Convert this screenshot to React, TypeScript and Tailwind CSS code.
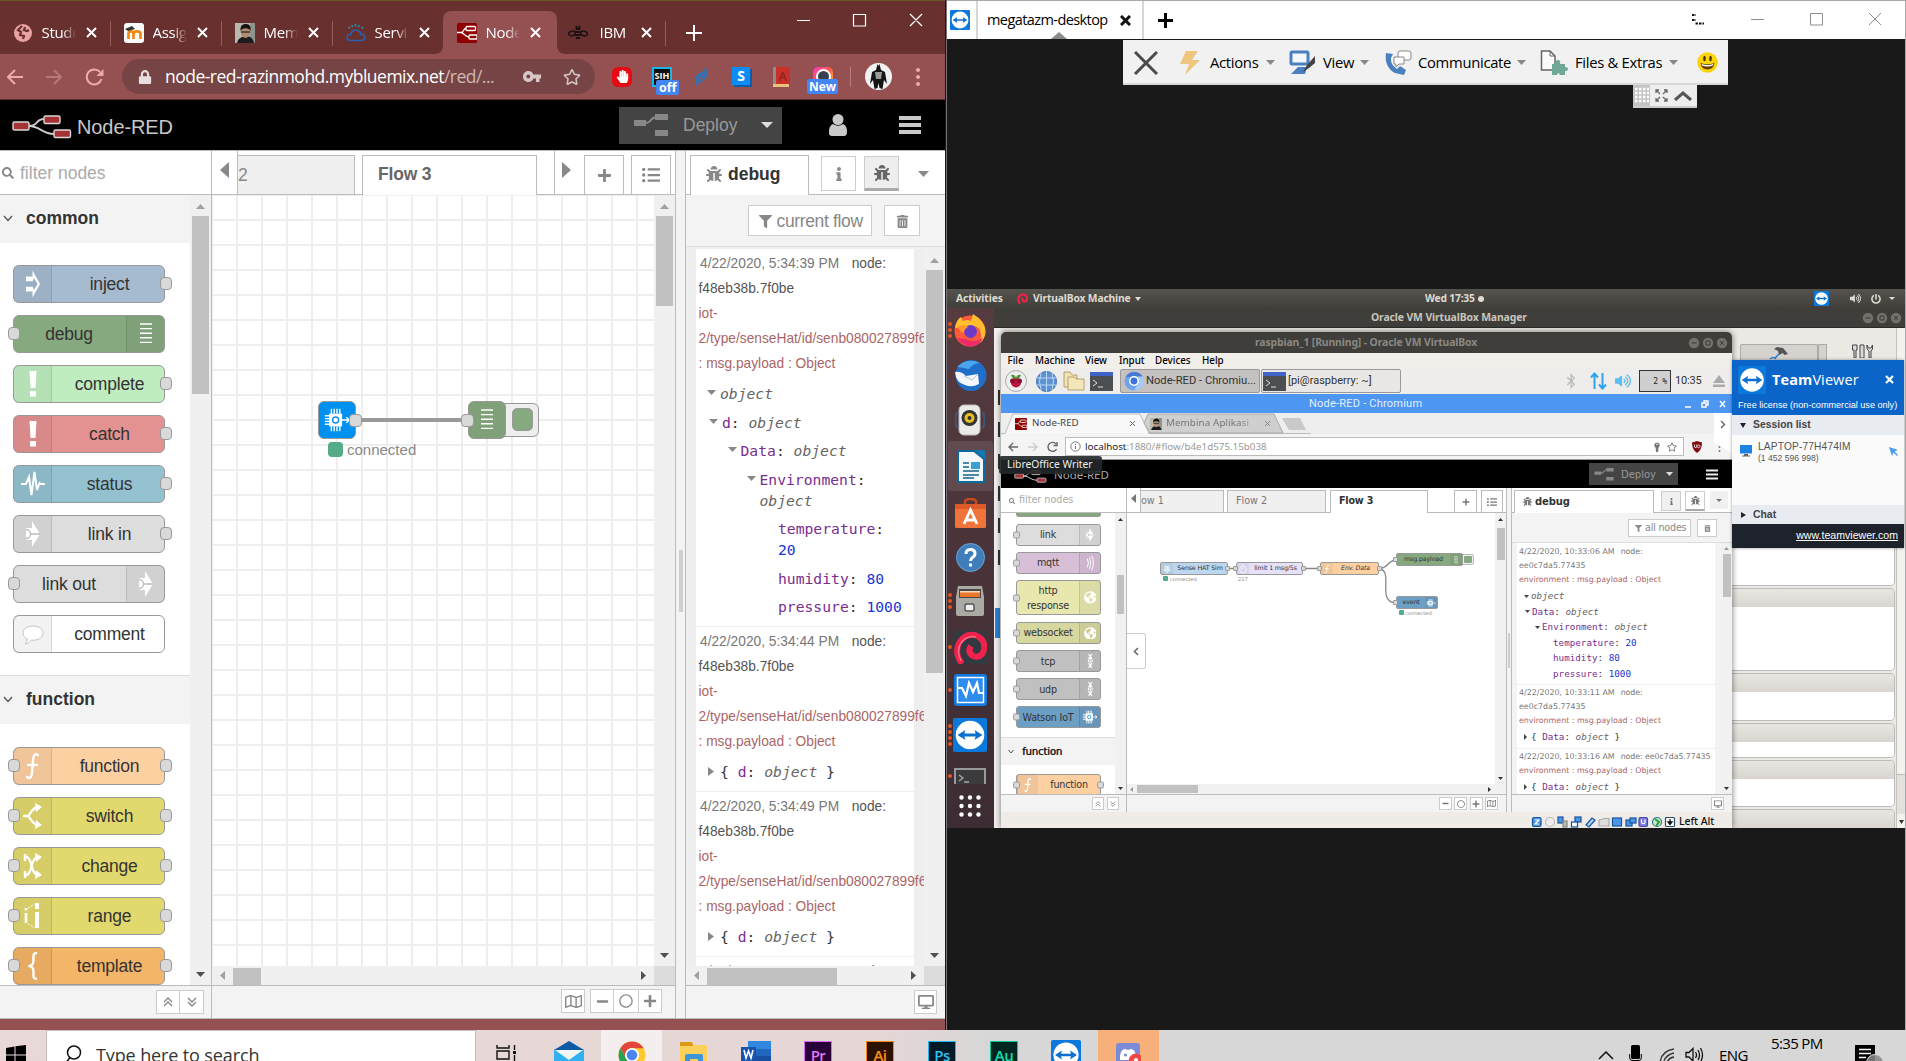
import React from "react";
import { FaBug, FaFilter, FaInfo, FaListUl, FaPlus, FaMinus, FaSearch, FaRegMap, FaDesktop, FaTrashAlt, FaRegCircle, FaLock, FaRegStar, FaKey, FaBluetoothB, FaVolumeUp, FaPowerOff, FaHandPaper, FaGlobeAmericas } from "react-icons/fa";

type Dir = "up" | "down" | "left" | "right";
const triPath: Record<Dir, string> = {
  up: "M0 10 L5 0 L10 10Z",
  down: "M0 0 H10 L5 10Z",
  left: "M10 0 V10 L0 5Z",
  right: "M0 0 L10 5 L0 10Z",
};

function Tri({ dir, w, h, color, className = "" }: { dir: Dir; w: number; h: number; color: string; className?: string }) {
  return (
    <svg width={w} height={h} viewBox="0 0 10 10" preserveAspectRatio="none" className={"shrink-0 " + className}>
      <path d={triPath[dir]} fill={color} />
    </svg>
  );
}

function TeamViewerLogo({ size, className = "" }: { size: number; className?: string }) {
  return (
    <svg width={size} height={size} viewBox="0 0 30 30" className={"shrink-0 " + className}>
      <rect width="30" height="30" rx="1.5" fill="#0b79db" />
      <circle cx="15" cy="15" r="12.6" fill="#fff" />
      <path d="M4 15 L11 10.5 L10 13.7 H20 L19 10.5 L26 15 L19 19.5 L20 16.3 H10 L11 19.5Z" fill="#0b6fd0" />
    </svg>
  );
}

/* ---------- Node icons ---------- */

function NodeIcon({ name, size }: { name: string; size: number }) {
  const p = { width: size, height: size, viewBox: "0 0 30 30", fill: "none", stroke: "#fff", strokeWidth: 2 };
  switch (name) {
    case "inject":
      return (
        <svg {...p}>
          <path d="M8 7.500 H14.500 V1.500 L22 15 L14.500 28.500 V22.500 H8 V17.500 H14.500 V12.500 H8Z" fill="#fff" stroke="none" />
          <path d="M8 12.500 H14.500 L16 9 L19.500 15 L16 21 L14.500 17.500 H8Z" fill="#9aadc2" stroke="none" />
        </svg>
      );
    case "debug":
      return (
        <svg {...p} strokeWidth={1.4}>
          <path d="M9 5 H21 M9 9.600 H21 M9 14.200 H21 M9 18.800 H21 M9 23.400 H21" />
        </svg>
      );
    case "bang":
      return (
        <svg {...p}>
          <path d="M11.500 2 H18.500 L17.500 19 H12.500Z M12 22 H18 V27.500 H12Z" fill="#fff" stroke="none" />
        </svg>
      );
    case "status":
      return (
        <svg {...p}>
          <path d="M3 15 H8 L11 8 L13.500 26 L16.500 3 L19 21 L21.500 14 L23 15 H27" />
        </svg>
      );
    case "link":
      return (
        <svg {...p}>
          <path d="M14 2 L22 15 L14 28 V21 H8 V9 H14Z" fill="#fff" stroke="none" />
          <path d="M8 10.500 A4.500 4.500 0 0 1 8 19.500 M13 15 H22" stroke="#bbb" strokeWidth="1.300" />
        </svg>
      );
    case "comment":
      return (
        <svg {...p} stroke="#c4c4c4" strokeWidth={1}>
          <path d="M15 7 C9 7 5 10 5 14 C5 17 7 19 9.500 20 C9 22.500 8 24 7 25 C10 24.500 12 23 13.500 21 C20 22 25 18.500 25 14 C25 10 21 7 15 7Z" fill="#fff" />
        </svg>
      );
    case "function":
      return (
        <svg {...p} strokeWidth={2.400} strokeLinecap="round">
          <path d="M20 4 C17 2 15.500 4.500 15 9 L14 22 C13.500 27 11.500 28 9 26 M10 14 H19" />
        </svg>
      );
    case "switch":
      return (
        <svg {...p} strokeWidth={2.400}>
          <path d="M5 15 H10 M20 6 C14 7 14 11 10 15 C14 19 14 23 20 24" />
          <path d="M17 2 L24 6 L18 11Z M17 28 L24 24 L18 19Z" fill="#fff" stroke="none" />
        </svg>
      );
    case "change":
      return (
        <svg {...p} strokeWidth={2.400}>
          <path d="M6 6 H9 C15 9 12 21 19 24 M6 24 H9 C15 21 12 9 19 6 M7 10 V3 M7 27 V20" />
          <path d="M17 2 L24 6 L18 11Z M17 28 L24 24 L18 19Z" fill="#fff" stroke="none" />
        </svg>
      );
    case "range":
      return (
        <svg {...p}>
          <path d="M8 12 V22 M8 7 V9.500" strokeWidth="2.600" />
          <path d="M19 11 V27 M19 2 V8" strokeWidth="4" />
          <path d="M10 7 L17 3 M10 23 L17 27" strokeWidth="1" strokeDasharray="2 1.500" />
        </svg>
      );
    case "template":
      return (
        <svg {...p} strokeWidth={2.400}>
          <path d="M19 2 C14.500 2 15.500 5 15.500 9 C15.500 13 14.500 15 10.500 15 C14.500 15 15.500 17 15.500 21 C15.500 25 14.500 28 19 28" />
        </svg>
      );
    case "wave":
      return (
        <svg {...p}>
          <path d="M10 7 Q14 15 10 23 M14 4 Q19 15 14 26 M18 1 Q25 15 18 29" strokeWidth="1.800" />
        </svg>
      );
    case "port":
      return (
        <svg {...p} strokeWidth={2.200}>
          <path d="M19 2 Q5 15 19 28 M12 2 Q26 15 12 28 M15.500 8 V22" strokeDasharray="5 1.200" />
        </svg>
      );
    case "globe":
      return <FaGlobeAmericas color="#fff" size={size * 0.8} />;
    case "clock":
      return (
        <svg {...p}>
          <circle cx="15" cy="17" r="10" />
          <path d="M11 12 L15 17 M12 3 H18" />
        </svg>
      );
    case "pi":
      return (
        <svg {...p}>
          <circle cx="11" cy="9" r="3" /><circle cx="19" cy="9" r="3" /><circle cx="15" cy="15" r="3" /><circle cx="9" cy="18" r="3" /><circle cx="21" cy="18" r="3" /><circle cx="15" cy="23" r="3" />
        </svg>
      );
    default:
      return (
        <svg {...p}>
          <rect x="6.500" y="8" width="14" height="14" fill="#fff" stroke="none" rx="1" />
          <path d="M9 3 V8 M12 3 V8 M15 3 V8 M18 3 V8 M9 22 V27 M12 22 V27 M15 22 V27 M18 22 V27 M2 10.500 H7 M2 13.500 H7 M2 16.500 H7 M2 19.500 H7 M20 15 H28 M25 12 L28 15 L25 18" strokeWidth="1.500" />
          <circle cx="13.500" cy="15" r="3.200" stroke="#0b8fe8" strokeWidth="1.500" />
        </svg>
      );
  }
}

interface PNode { label: string; color: string; icon: string; left?: boolean; right?: boolean; iconRight?: boolean }

function PaletteNode({ label, color, icon, left, right, iconRight }: PNode) {
  return (
    <div className={"relative mb-[12px] flex h-[38px] w-[152px] rounded-[6px] border-[1.500px] border-[#999] " + color + (iconRight ? " flex-row-reverse" : "")}>
      <div className={"flex w-[38px] items-center justify-center bg-black/5 " + (iconRight ? "border-l border-black/10" : "border-r border-black/10")}>
        <NodeIcon name={icon} size={30} />
      </div>
      <div className={"flex flex-1 items-center justify-center text-[17.500px] tracking-[-0.200px] text-[#333] " + (iconRight ? "pr-[2px]" : "pl-[3px]")}>{label}</div>
      {left && <span className="absolute top-[11px] left-[-6.500px] size-[12.500px] rounded-[4px] border-[1.500px] border-[#999] bg-[#d9d9d9]" />}
      {right && <span className="absolute top-[11px] right-[-8px] size-[12.500px] rounded-[4px] border-[1.500px] border-[#999] bg-[#d9d9d9]" />}
    </div>
  );
}

const commonNodes: PNode[] = [
  { label: "inject", color: "bg-[#a6bbcf]", icon: "inject", right: true },
  { label: "debug", color: "bg-[#87a980]", icon: "debug", left: true, iconRight: true },
  { label: "complete", color: "bg-[#c0edc0]", icon: "bang", right: true },
  { label: "catch", color: "bg-[#e49191]", icon: "bang", right: true },
  { label: "status", color: "bg-[#94c1d0]", icon: "status", right: true },
  { label: "link in", color: "bg-[#dddddd]", icon: "link", right: true },
  { label: "link out", color: "bg-[#dddddd]", icon: "link", left: true, iconRight: true },
  { label: "comment", color: "bg-white", icon: "comment" },
];
const functionNodes: PNode[] = [
  { label: "function", color: "bg-[#fdd0a2]", icon: "function", left: true, right: true },
  { label: "switch", color: "bg-[#e2d96e]", icon: "switch", left: true, right: true },
  { label: "change", color: "bg-[#e2d96e]", icon: "change", left: true, right: true },
  { label: "range", color: "bg-[#e2d96e]", icon: "range", left: true, right: true },
  { label: "template", color: "bg-[#f3b567]", icon: "template", left: true, right: true },
];

/* ---------- Chrome ---------- */

function CloseX({ size = 11, color = "#fff", sw = 2, className = "" }: { size?: number; color?: string; sw?: number; className?: string }) {
  return (
    <svg width={size} height={size} viewBox={"0 0 " + size + " " + size} className={"shrink-0 " + className}>
      <path d={`M1 1 L${size - 1} ${size - 1} M${size - 1} 1 L1 ${size - 1}`} stroke={color} strokeWidth={sw} />
    </svg>
  );
}

function NodeRedMark({ size }: { size: number }) {
  return (
    <svg width={size} height={size} viewBox="0 0 20 20" fill="none" stroke="#fff" strokeWidth="1.300">
      <rect width="20" height="20" rx="1.500" fill="#8f0000" stroke="none" />
      <rect x="9" y="3.500" width="9.500" height="4" rx="1" />
      <rect x="12" y="12" width="8" height="4" rx="1" />
      <path d="M0 9.500 H4 C7 9.500 6 5.500 9 5.500 M4 9.500 C7 9.500 8 14 12 14" />
    </svg>
  );
}

function Face({ size }: { size: number }) {
  return (
    <svg width={size} height={size} viewBox="0 0 20 20">
      <rect width="20" height="20" fill="#b9b8ad" />
      <rect x="15" width="5" height="20" fill="#8d948c" />
      <path d="M2 20 C3 15 8 13 11 13 C16 13 18 16 19 20Z" fill="#1c1c1e" />
      <ellipse cx="10.500" cy="9" rx="4.600" ry="6" fill="#b48a72" />
      <path d="M5.500 8 C5 2 8 1 11 1 C15 1 16 4 15.500 8 C14 5 8 4 5.500 8Z" fill="#17130f" />
      <path d="M6 9 H15" stroke="#222" strokeWidth="1.200" />
    </svg>
  );
}

const favicons = [
  <svg width="18" height="18" viewBox="0 0 18 18"><circle cx="9" cy="9" r="9" fill="#eba2a2" /><path d="M8 2 L4 6 L7 8 L6 11 L10 12 L9 15 M11 3 L10 6 L13 7 L15 6" stroke="#68302f" strokeWidth="2.200" fill="none" /></svg>,
  <svg width="20" height="20" viewBox="0 0 20 20"><rect width="20" height="20" rx="3" fill="#fafafa" /><path d="M4.500 16 V10 M4.500 11 C4.500 7.500 9.500 7.500 9.500 11 V16 M9.500 11 C9.500 7.500 16.500 7.500 16.500 11 V16" stroke="#f08a12" strokeWidth="2.700" fill="none" /><path d="M1 6 L8 3 L11 6 L4 8Z" fill="#333" /></svg>,
  <Face size={20} />,
  <svg width="20" height="20" viewBox="0 0 20 20" fill="none" strokeWidth="1.600"><path d="M5 17.500 C-.5 17 0 11 4.500 11.500 C6 6 14 6 14.500 11 C20 11 20 17.500 15.500 17.500Z" stroke="#2e5fae" /><path d="M2.500 4 L4 5.500 M9.500 1 V3.500 M17 4 L15.500 5.500 M6 2 L6.500 4 M13 2 L12.500 4" stroke="#2a93a8" /></svg>,
  <NodeRedMark size={20} />,
  <svg width="20" height="16" viewBox="0 0 20 16" fill="none" stroke="#1b1214" strokeWidth="1.400"><ellipse cx="4" cy="8.500" rx="3.300" ry="2.300" transform="rotate(-15 4 8.500)" /><ellipse cx="16" cy="8.500" rx="3.300" ry="2.300" transform="rotate(15 16 8.500)" /><path d="M7.500 4 H12.500 M7 7 H13 M7 10 H13 M8 13 H12 M8 1 L9 3 M12 1 L11 3" strokeWidth="2" /></svg>,
];
const tabTitles = ["Stude", "Assig", "Mem", "Servi", "Node", "IBM W"];

function ChromeTabs() {
  return (
    <div className="flex h-[54px] shrink-0 border-t border-[#6a5a2c] bg-[#68302f] font-['Open_Sans',sans-serif]">
      {tabTitles.map((t, i) => (
        <div key={t} className="relative flex h-full w-[111px] shrink-0 items-center pt-[10px]">
          {i === 4 && (
            <svg className="absolute top-[10px] left-[-10px]" width="132" height="43" viewBox="0 0 132 43">
              <path d="M0 43 Q9 43 9 34 V9 Q9 0 18 0 H114 Q123 0 123 9 V34 Q123 43 132 43Z" fill="#955051" />
            </svg>
          )}
          <span className="relative ml-[12px] flex w-[21px] justify-center">{favicons[i]}</span>
          <span className={"relative ml-[8.500px] w-[34px] overflow-hidden text-[15px] tracking-[-0.300px] whitespace-nowrap text-white " + (i === 5 ? "pl-[3px] [mask-image:linear-gradient(90deg,#000_80%,transparent_95%)]" : "[mask-image:linear-gradient(90deg,#000_60%,transparent)]")}>{t}</span>
          <CloseX className="relative ml-[10px]" size={11} />
          {i !== 4 && i !== 3 && <span className="absolute top-[20px] right-0 h-[25px] w-px bg-[#93605f]" />}
        </div>
      ))}
      <svg className="mt-[24px] ml-[20px]" width="16" height="16" viewBox="0 0 16 16"><path d="M8 0 V16 M0 8 H16" stroke="#fff" strokeWidth="2" /></svg>
      <svg className="mt-[12px] ml-[94px]" width="130" height="14" viewBox="0 0 130 14" fill="none" stroke="#fff" strokeWidth="1.200">
        <path d="M1 7.500 H14 M57.500 1.500 H69.500 V13 H57.500Z M114 1 L126 13 M126 1 L114 13" />
      </svg>
    </div>
  );
}

function ChromeToolbar() {
  return (
    <div className="flex h-[46px] shrink-0 items-center border-b border-[#5c2f30] bg-[#955051] font-['Open_Sans',sans-serif]">
      <svg className="ml-[6px] shrink-0" width="98" height="18" viewBox="0 0 98 18" fill="none" strokeWidth="2">
        <path d="M17 9 H2 M9 2 L2 9 L9 16" stroke="#f0a9a9" />
        <path d="M40 9 H55 M48 2 L55 9 L48 16" stroke="#b97777" />
        <path d="M94 4 A7.500 7.500 0 1 0 95.500 11" stroke="#f0a9a9" /><path d="M97.500 1 V8 H90.500Z" fill="#f0a9a9" />
      </svg>
      <div className="ml-[18px] flex h-[35px] w-[473px] shrink-0 items-center rounded-full bg-[#764444]">
        <FaLock className="ml-[16px] shrink-0" size={14} color="#e8dede" />
        <span className="ml-[13px] w-[345px] text-[17.500px] tracking-[-0.520px] whitespace-nowrap text-white">node-red-razinmohd.mybluemix.net<span className="text-[#d0b8b8]">/red/...</span></span>
        <svg className="ml-[13px] shrink-0" width="18" height="11" viewBox="0 0 18 11"><path fillRule="evenodd" d="M5.500 0 C2 0 0 2.500 0 5.500 C0 8.500 2 11 5.500 11 C8 11 9.500 9.500 10.300 7.500 H13 V11 H16.500 V7.500 H18 V3.500 H10.300 C9.500 1.500 8 0 5.500 0Z M5.300 3.600 A1.900 1.900 0 1 1 5.300 7.400 A1.900 1.900 0 1 1 5.300 3.600Z" fill="#d6c6c6" /></svg>
        <FaRegStar className="ml-[22px] shrink-0" size={18} color="#d6c6c6" />
      </div>
      <span className="ml-[17px] flex size-[20px] shrink-0 items-center justify-center rounded-[6px] bg-[#e60a14]"><FaHandPaper size={13} color="#fff" /></span>
      <span className="relative ml-[20px] flex size-[20px] shrink-0 items-start justify-center border-2 border-[#18b5e8] bg-[#101010] text-[9px] leading-[14px] font-bold text-white">SIH
        <span className="absolute top-[11px] left-[2px] rounded-[2px] bg-[#4285f4] px-[3px] text-[12.500px] leading-[15px]">off</span>
      </span>
      <svg className="ml-[22px] shrink-0" width="15" height="20" viewBox="0 0 15 20"><path d="M12 0 C14 6 14 12 7 15 L2 19 L1 13 C0 9 4 7 8 5Z" fill="#2f73b6" /><path d="M3 17 L11 4 M4 11 L9 12" stroke="#8a5860" strokeWidth="1" /></svg>
      <svg className="ml-[23px] shrink-0" width="20" height="20" viewBox="0 0 20 20"><rect x="2" y="2" width="18" height="18" fill="#0a5da8" /><rect width="18" height="18" fill="#0c8df5" /><text x="9" y="14" textAnchor="middle" fontSize="14" fontWeight="bold" fontFamily="Open Sans" fill="#fff">S</text></svg>
      <svg className="ml-[21px] shrink-0" width="17" height="20" viewBox="0 0 17 20"><rect width="17" height="20" rx="1" fill="#c9302a" /><rect width="3" height="20" fill="#8f8c8c" /><rect y="17" width="16" height="3" fill="#e6c27a" /><text x="9.500" y="14" textAnchor="middle" fontSize="13" fontFamily="Open Sans" fill="#7d1f1c">A</text></svg>
      <span className="relative ml-[23px] flex size-[20px] shrink-0 items-center justify-center rounded-[5px] bg-[linear-gradient(135deg,#f03ac2,#ff5e4a_50%,#ffc830)]">
        <span className="size-[15px] rounded-full border-2 border-white bg-[#35414f]" />
        <span className="absolute top-[12px] left-[-6px] rounded-[2px] bg-[#4285f4] px-[2px] text-[12px] leading-[15px] font-bold text-white">New</span>
      </span>
      <span className="ml-[17px] h-[20px] w-px bg-[#b87a7b]" />
      <svg className="ml-[14px] shrink-0" width="27" height="27" viewBox="0 0 27 27"><circle cx="13.500" cy="13.500" r="13.500" fill="#f1f1f1" /><path d="M5 21 L7 9 L11 7 L12.500 1 L13.500 3 L14.500 1 L16 7 L20 9 L22 21 L19 17 L17.500 26 L14.500 25 L13.500 20 L12.500 25 L9.500 26 L8 17Z" fill="#151515" /><path d="M10 9 H17 L16 16 H11Z" fill="#9b9b9b" /></svg>
      <svg className="ml-[24px] shrink-0" width="4" height="18" viewBox="0 0 4 18"><path d="M2 0 A2 2 0 1 1 1.990 0Z M2 7 A2 2 0 1 1 1.990 7Z M2 14 A2 2 0 1 1 1.990 14Z" fill="#f0a9a9" /></svg>
    </div>
  );
}

function DeployGlyph({ w, h }: { w: number; h: number }) {
  return (
    <svg className="shrink-0" width={w} height={h} viewBox="0 0 34 23">
      <path d="M11 9 C19 9 15 3 23 3" stroke="#888" strokeWidth="2" fill="none" />
      <path d="M0 6 H12 V12 H0Z M21 0 H34 V6 H21Z M21 16 H34 V22 H21Z" fill="#888" />
    </svg>
  );
}

function NodeRedLogo({ w, h }: { w: number; h: number }) {
  return (
    <svg className="shrink-0" width={w} height={h} viewBox="0 0 60 24" fill="none">
      <path d="M17 11 C27 11 23 4 32 4 M17 11 C28 11 30 19 42 19" stroke="#ccc" strokeWidth="1.800" />
      <g fill="#a53335" stroke="#d8d8d8" strokeWidth="1.400"><rect x="1" y="7" width="16" height="8" rx="1.500" /><rect x="32" y="1" width="16" height="7.500" rx="1.500" /><rect x="42" y="15" width="16.500" height="7.500" rx="1.500" /></g>
    </svg>
  );
}

function NodeRedHeader() {
  return (
    <div className="flex h-[50px] shrink-0 items-center bg-black">
      <span className="ml-[12px] pt-1"><NodeRedLogo w={60} h={24} /></span>
      <span className="ml-[5px] w-[110px] pt-[3px] text-[20px] tracking-[-0.100px] text-[#c7c7c7]">Node-RED</span>
      <div className="ml-[432px] flex h-[37px] w-[163px] items-center bg-[#444]">
        <span className="ml-[15px]"><DeployGlyph w={34} h={23} /></span>
        <span className="ml-[15px] w-[78px] text-[17.500px] text-[#999]">Deploy</span>
        <Tri dir="down" w={12} h={6} color="#ddd" />
      </div>
      <svg className="ml-[46px]" width="20" height="22" viewBox="0 0 20 22" fill="#c9c9c9"><circle cx="10" cy="5.500" r="5.500" /><path d="M5 10 Q10 13.500 15 10 Q19.500 12 19 19 Q18.500 22 16 22 H4 Q1 22 1 19 Q.5 12 5 10Z" /></svg>
      <svg className="ml-[51px]" width="22" height="18" viewBox="0 0 22 18"><path d="M0 2 H22 M0 9 H22 M0 16 H22" stroke="#c9c9c9" strokeWidth="4" /></svg>
    </div>
  );
}

function VScroll({ thumb }: { thumb: string }) {
  return (
    <div className="flex w-[21px] shrink-0 flex-col items-center bg-[#f0f0f0]">
      <Tri dir="up" w={9} h={5} color="#a0a0a0" className="mt-[9px] mb-[7px]" />
      <div className={"w-[17px] bg-[#c1c1c1] " + thumb} />
      <Tri dir="down" w={9} h={5} color="#505050" className="mt-auto mb-[8px]" />
    </div>
  );
}

function HScroll({ thumb }: { thumb: string }) {
  return (
    <div className="flex h-[19px] w-full shrink-0 items-center bg-[#f0f0f0]">
      <Tri dir="left" w={5} h={9} color="#a0a0a0" className="ml-[8px]" />
      <div className={"mt-[2px] ml-[8px] h-[17px] bg-[#c1c1c1] " + thumb} />
      <Tri dir="right" w={5} h={9} color="#505050" className="mr-[8px] ml-auto" />
    </div>
  );
}

function CategoryHeader({ label, first }: { label: string; first?: boolean }) {
  return (
    <div className={"flex items-center bg-[#f3f3f3] pb-[1px] " + (first ? "h-[48px]" : "h-[49px] border-t border-[#ddd]")}>
      <svg className="ml-[3px]" width="10" height="7" viewBox="0 0 10 7"><path d="M1 1 L5 5.500 L9 1" stroke="#555" strokeWidth="1.400" fill="none" /></svg>
      <span className="ml-[13px] text-[17.500px] font-bold text-[#333]">{label}</span>
    </div>
  );
}

function DoubleChevron({ down, size = 10 }: { down?: boolean; size?: number }) {
  return (
    <svg width={size} height={size} viewBox="0 0 10 10" className={down ? "rotate-180" : ""}><path d="M1 5 L5 1 L9 5 M1 9 L5 5 L9 9" stroke="#888" strokeWidth="1.400" fill="none" /></svg>
  );
}

function Palette() {
  return (
    <div className="flex w-[212px] shrink-0 flex-col border-r border-[#bbb]">
      <div className="flex h-[44px] shrink-0 items-center border-b border-[#bbb] bg-white">
        <FaSearch className="ml-[2px]" size={12} color="#888" />
        <span className="ml-[6px] pt-[2px] text-[17.500px] text-[#aaa]">filter nodes</span>
      </div>
      <div className="flex h-[790px] shrink-0">
        <div className="w-[190px] overflow-hidden bg-white">
          <CategoryHeader label="common" first />
          <div className="pt-[22px] pb-[10px] pl-[13px]">{commonNodes.map((n) => <PaletteNode key={n.label} {...n} />)}</div>
          <CategoryHeader label="function" />
          <div className="pt-[23px] pl-[13px]">{functionNodes.map((n) => <PaletteNode key={n.label} {...n} />)}</div>
        </div>
        <VScroll thumb="h-[178px]" />
      </div>
      <div className="flex h-[34px] items-start justify-end border-t border-[#bbb] bg-[#f3f3f3] pt-[4px] pr-[7px]">
        <span className="flex h-[24px] w-[24px] items-center justify-center border border-[#ccc] bg-white"><DoubleChevron /></span>
        <span className="flex h-[24px] w-[24px] items-center justify-center border border-l-0 border-[#ccc] bg-white"><DoubleChevron down /></span>
      </div>
    </div>
  );
}

function Port({ className }: { className: string }) {
  return <span className={"absolute size-[13px] rounded-[4px] border-[1.500px] border-[#999] bg-[#d9d9d9] " + className} />;
}

function Workspace() {
  const btn = "flex h-[24px] items-center justify-center border border-[#ccc] bg-white";
  return (
    <div className="flex w-[464px] shrink-0 flex-col border-r border-[#bbb] bg-white">
      <div className="flex h-[44px] shrink-0 border-b border-[#bbb]">
        <div className="flex w-[26px] items-start justify-center border-r border-[#bbb] pt-[11px]"><Tri dir="left" w={9} h={16} color="#888" /></div>
        <div className="mt-[4px] flex w-[117px] items-center border-t border-r border-[#bbb] bg-[#f0f0f0] text-[17.500px] text-[#888]">2</div>
        <div className="relative mt-[4px] ml-[7px] flex h-[41px] w-[175px] items-center border-x border-t border-[#bbb] bg-white pb-[4px] pl-[15px] text-[17.500px] font-bold tracking-[-0.200px] text-[#666]">Flow 3</div>
        <div className="ml-[17px] flex w-[30px] items-start border-l border-[#bbb] pt-[11px] pl-[7px]"><Tri dir="right" w={9} h={16} color="#888" /></div>
        <div className="mt-[4px] flex w-[40px] items-center justify-center border border-b-0 border-[#bbb]"><FaPlus size={15} color="#888" /></div>
        <div className="mt-[4px] ml-[7px] flex w-[40px] items-center justify-center border border-b-0 border-[#bbb]"><FaListUl size={18} color="#888" /></div>
      </div>
      <div className="flex h-[771px] shrink-0">
        <div className="relative w-[442px] overflow-hidden bg-white bg-[linear-gradient(#eee_2px,transparent_2px),linear-gradient(90deg,#eee_2px,transparent_2px)] bg-[length:25px_25px] bg-[position:-1px_-1px] font-['Liberation_Sans',sans-serif]">
          <div className="absolute top-[223px] left-[146px] h-[4px] w-[110px] bg-[#999]" />
          <div className="absolute top-[206px] left-[106px] flex size-[38px] items-center justify-center rounded-[6px] border-[1.500px] border-[#999] bg-[#0090f0]"><NodeIcon name="iot" size={28} /></div>
          <Port className="top-[218.500px] left-[137px]" />
          <div className="absolute top-[208px] left-[284px] h-[34px] w-[43px] rounded-[6px] border-[1.500px] border-[#999] bg-[#eee]"><span className="absolute top-[4px] right-[5px] h-[23px] w-[21px] rounded-[5px] border border-[#999] bg-[#87a980]" /></div>
          <div className="absolute top-[206px] left-[256px] flex size-[38px] items-center justify-center rounded-[6px] border-[1.500px] border-[#999] bg-[#80a079]"><NodeIcon name="debug" size={30} /></div>
          <Port className="top-[218.500px] left-[249px]" />
          <span className="absolute top-[247px] left-[115.500px] size-[15px] rounded-[4px] bg-[#5a8]" />
          <span className="absolute top-[246px] left-[135px] text-[15px] leading-[18px] text-[#888]">connected</span>
        </div>
        <VScroll thumb="h-[90px]" />
      </div>
      <div className="flex h-[19px] shrink-0">
        <div className="w-[442px]"><HScroll thumb="w-[28px]" /></div>
        <div className="flex-1 bg-[#dcdcdc]" />
      </div>
      <div className="flex h-[34px] items-start justify-end border-t border-[#bbb] bg-[#f3f3f3] pt-[3px] pr-[13px]">
        <span className={btn + " mr-[5px] w-[24px]"}><FaRegMap size={17} color="#888" /></span>
        <span className={btn + " w-[24px]"}><FaMinus size={13} color="#888" /></span>
        <span className={btn + " w-[24px] border-x-0"}><FaRegCircle size={14} color="#888" /></span>
        <span className={btn + " w-[24px]"}><FaPlus size={14} color="#888" /></span>
      </div>
    </div>
  );
}

function Row({ indent, name, value, obj, brk }: { indent: string; name?: string; value?: string; obj?: boolean; brk?: boolean }) {
  return (
    <div className={"flex items-start py-[3.750px] " + indent}>
      {obj ? <Tri dir="down" w={9} h={5} color="#888" className="mt-[7px] mr-[4px]" /> : null}
      <div className="whitespace-nowrap">
        {name && <><span className="text-[#792e90]">{name}</span>:{brk ? <br /> : " "}</>}
        {obj ? <i className="text-[#666]">object</i> : <span className="text-[#2033d6]">{value}</span>}
      </div>
    </div>
  );
}

function MessageMeta({ time }: { time: string }) {
  return (
    <div className="pt-[1.500px] pl-[2.500px] text-[13.750px] leading-[25px] whitespace-nowrap text-[#555]">
      <div className="pl-[1.500px]"><span className="text-[#777]">{time}</span><span className="ml-[12.500px]">node:</span></div>
      <div>f48eb38b.7f0be</div>
      <div className="text-[#a66]">iot-<br />2/type/senseHat/id/senb080027899f6<br />: msg.payload : Object</div>
    </div>
  );
}

function CollapsedRow({ name, big }: { name: string; big?: boolean }) {
  return (
    <div className={"flex items-center " + (big ? "h-[28.500px] pl-[12px]" : "h-[15.500px] pl-[7px]")}>
      <Tri dir="right" w={big ? 6 : 3} h={big ? 9 : 6} color={big ? "#888" : "#444"} />
      <span className={(big ? "ml-[6px]" : "ml-[4px]") + " whitespace-pre text-[#333]"}>{"{ "}<span className="text-[#792e90]">{name}</span>: <i className="text-[#666]">object</i>{" }"}</span>
    </div>
  );
}

function DebugSidebar() {
  const mono = "font-['DejaVu_Sans_Mono',monospace] text-[14.700px] leading-[21px] pt-[4px] text-[#333]";
  return (
    <div className="flex w-[260px] shrink-0 flex-col border-l border-[#bbb] bg-white">
      <div className="flex h-[44px] shrink-0 border-b border-[#bbb]">
        <div className="relative mt-[4px] ml-[4px] flex h-[40px] w-[119px] items-center border-x border-t border-[#bbb] bg-white pb-[3px] pl-[15px]">
          <FaBug size={16} color="#888" /><span className="ml-[6px] text-[17.500px] font-bold text-[#333]">debug</span>
        </div>
        <div className="mt-[5px] ml-[12px] flex h-[35px] w-[35px] items-center justify-center border border-[#ccc]"><FaInfo size={14} color="#888" /></div>
        <div className="mt-[5px] ml-[8px] flex h-[35px] w-[35px] items-center justify-center border border-b-3 border-[#ccc] border-b-[#aaa] bg-[#eee]"><FaBug size={16} color="#666" /></div>
        <Tri dir="down" w={11} h={6} color="#888" className="mt-[20px] ml-[19px]" />
      </div>
      <div className="flex h-[52px] shrink-0 items-start border-b border-[#ddd] bg-[#f3f3f3] pt-[10px] text-[17.500px] text-[#888]">
        <div className="ml-[62px] flex h-[31px] w-[124px] items-center border border-[#ccc] bg-white pt-[2px] pl-[10px]"><FaFilter size={13} /><span className="ml-[4.500px] tracking-[-0.350px] whitespace-nowrap">current flow</span></div>
        <div className="ml-[12px] flex h-[31px] w-[36px] items-center justify-center border border-[#ccc] bg-white pt-px"><FaTrashAlt size={13} /></div>
      </div>
      <div className="flex h-[719px] shrink-0 bg-[#f0f0f0] pt-[2px]">
        <div className="w-[238px] overflow-hidden bg-[#eee] pl-[10px]">
          <div className="w-[218px] bg-white">
            <div className="h-[378px] border-b border-[#eee]">
              <MessageMeta time="4/22/2020, 5:34:39 PM" />
              <div className={mono}>
                <Row indent="pl-[11px]" obj /><Row indent="pl-[13px]" name="d" obj /><Row indent="pl-[31.500px]" name="Data" obj />
                <Row indent="pl-[50.500px]" name="Environment" obj brk />
                <Row indent="pl-[82px]" name="temperature" value="20" brk /><Row indent="pl-[82px]" name="humidity" value="80" /><Row indent="pl-[82px]" name="pressure" value="1000" />
              </div>
            </div>
            {["4/22/2020, 5:34:44 PM", "4/22/2020, 5:34:49 PM", "4/22/2020, 5:34:54 PM"].map((t) => (
              <div key={t} className="h-[165px] border-b border-[#eee]"><MessageMeta time={t} /><div className={mono}><CollapsedRow name="d" big /></div></div>
            ))}
          </div>
        </div>
        <VScroll thumb="h-[403px]" />
      </div>
      <div className="flex h-[19px] shrink-0">
        <div className="w-[238px]"><HScroll thumb="w-[130px]" /></div>
        <div className="flex-1 bg-[#dcdcdc]" />
      </div>
      <div className="flex h-[34px] items-start justify-end border-t border-[#bbb] bg-[#f3f3f3] pt-[4px] pr-[8px]">
        <span className="flex h-[24px] w-[23px] items-center justify-center border border-[#ccc] bg-white"><FaDesktop size={16} color="#888" /></span>
      </div>
    </div>
  );
}

function ChromeWindow() {
  return (
    <div className="flex h-[1030px] w-[945px] shrink-0 flex-col overflow-hidden bg-[#955051] font-['Liberation_Sans',sans-serif]">
      <ChromeTabs />
      <ChromeToolbar />
      <NodeRedHeader />
      <div className="flex h-[869px] shrink-0 border-y border-[#bbb] bg-[#f3f3f3]">
        <Palette />
        <Workspace />
        <div className="flex w-[9px] shrink-0 items-start justify-center"><span className="mt-[399px] h-[62px] w-[4px] bg-[#d0d0d0]" /></div>
        <DebugSidebar />
      </div>
    </div>
  );
}

/* ---------- Remote desktop ---------- */

function MiniNode({ label, color, icon, h = "h-[21.500px]", mb = "mb-[6.600px]", left = true, right, iconLeft }: { label: React.ReactNode; color: string; icon: string; h?: string; mb?: string; left?: boolean; right?: boolean; iconLeft?: boolean }) {
  return (
    <div className={"relative flex w-[85px] shrink-0 rounded-[3px] border border-[#999] " + color + " " + h + " " + mb + (iconLeft ? " flex-row-reverse" : "")}>
      <div className="flex flex-1 items-center justify-center text-center text-[9.600px] leading-[15px] tracking-[-0.200px] whitespace-nowrap text-[#333]">{label}</div>
      <div className="flex w-[21px] items-center justify-center border-l border-black/10 bg-black/5"><NodeIcon name={icon} size={16} /></div>
      {left && <span className="absolute top-1/2 left-[-4px] size-[7px] -translate-y-1/2 rounded-[2px] border border-[#999] bg-[#d9d9d9]" />}
      {right && <span className="absolute top-1/2 right-[-4px] size-[7px] -translate-y-1/2 rounded-[2px] border border-[#999] bg-[#d9d9d9]" />}
    </div>
  );
}

function MiniPalette() {
  return (
    <div className="flex w-[126px] shrink-0 flex-col border-r border-[#bbb]">
      <div className="flex h-[25px] shrink-0 items-center border-b border-[#bbb] bg-white pt-[1px]"><FaSearch className="ml-[8px]" size={6} color="#777" /><span className="ml-[4px] text-[9.600px] text-[#aaa]">filter nodes</span></div>
      <div className="flex h-[281px] shrink-0">
        <div className="flex w-[114px] flex-col overflow-hidden bg-white">
          <div className="ml-[15px] h-[4px] w-[85px] shrink-0 rounded-b-[3px] border border-t-0 border-[#999] bg-[#87a980]" />
          <div className="flex shrink-0 flex-col pt-[7px] pl-[15px]">
            <MiniNode label="link" color="bg-[#ddd]" icon="link" />
            <MiniNode label="mqtt" color="bg-[#d8bfd8]" icon="wave" />
            <MiniNode label={<>http<br />response</>} color="bg-[#e7e7ae]" icon="globe" h="h-[35px]" mb="mb-[7px]" />
            <MiniNode label="websocket" color="bg-[#d7d7a0]" icon="globe" />
            <MiniNode label="tcp" color="bg-[#c0c0c0]" icon="port" />
            <MiniNode label="udp" color="bg-[#c0c0c0]" icon="port" />
            <MiniNode label="Watson IoT" color="bg-[#6d9fc5]" icon="iot" />
          </div>
          <div className="mt-[2.500px] flex h-[28px] shrink-0 items-center border-t border-[#ddd] bg-[#f3f3f3]"><svg className="ml-[7px]" width="6" height="5" viewBox="0 0 6 5"><path d="M.5 1 L3 4 L5.500 1" stroke="#555" fill="none" /></svg><span className="ml-[8px] text-[10px] tracking-[-0.100px] text-[#222] [text-shadow:0.4px_0_#222]">function</span></div>
          <div className="pt-[9px] pl-[15px]"><MiniNode label="function" color="bg-[#fdd0a2]" icon="function" right iconLeft /></div>
        </div>
        <div className="flex w-[11px] flex-col items-center bg-[#f1f1f1]">
          <Tri dir="up" w={5} h={3} color="#333" className="mt-[5px]" /><div className="mt-[54px] h-[39px] w-[7px] bg-[#c1c1c1]" /><Tri dir="down" w={5} h={3} color="#333" className="mt-auto mb-[4px]" />
        </div>
      </div>
      <div className="flex h-[18px] justify-end gap-[3px] border-t border-[#bbb] bg-[#f3f3f3] pt-[2px] pr-[7px]">
        <span className="flex h-[13px] w-[12px] items-center justify-center border border-[#ccc] bg-white"><DoubleChevron size={6} /></span>
        <span className="flex h-[13px] w-[12px] items-center justify-center border border-[#ccc] bg-white"><DoubleChevron size={6} down /></span>
      </div>
    </div>
  );
}

function FlowNode({ className, children, icon, iconRight }: { className: string; children: React.ReactNode; icon: string; iconRight?: boolean }) {
  return (
    <div className={"absolute flex h-[13px] items-center rounded-[2px] border border-[#999] text-[6.300px] leading-none tracking-[-0.150px] whitespace-nowrap text-[#333] " + className + (iconRight ? " flex-row-reverse" : "")}>
      <span className="flex h-full w-[12px] shrink-0 items-center justify-center bg-black/5"><NodeIcon name={icon} size={10} /></span>
      <span className="flex-1 text-center">{children}</span>
    </div>
  );
}

function MiniPort({ className }: { className: string }) {
  return <span className={"absolute size-[5px] rounded-[1px] border border-[#999] bg-[#d9d9d9] " + className} />;
}

function MiniWorkspace() {
  const btn = "flex h-[13px] w-[13px] items-center justify-center border border-[#ccc] bg-white";
  return (
    <div className="flex w-[380px] shrink-0 flex-col border-r border-[#bbb] bg-white">
      <div className="flex h-[25px] shrink-0 border-b border-[#bbb] text-[9.600px] text-[#777]">
        <div className="flex w-[14px] justify-center border-r border-[#bbb] pt-[6px]"><Tri dir="left" w={5} h={9} color="#777" /></div>
        <div className="mt-[2px] flex w-[83px] items-center border-t border-r border-[#bbb] bg-[#f0f0f0]">ow 1</div>
        <div className="mt-[2px] ml-[3px] flex w-[99px] items-center border-x border-t border-[#bbb] bg-[#f0f0f0] pl-[8px]">Flow 2</div>
        <div className="mt-[2px] ml-[4px] flex h-[23px] w-[98px] items-center border-x border-t border-[#bbb] bg-white pb-[1px] pl-[8px] font-bold tracking-[-0.200px] text-[#333]">Flow 3</div>
        <div className="mt-[2px] ml-[26px] flex w-[23px] items-center justify-center border border-b-0 border-[#bbb]"><FaPlus size={8} color="#777" /></div>
        <div className="mt-[2px] ml-[4px] flex w-[22px] items-center justify-center border border-b-0 border-[#bbb]"><FaListUl size={10} color="#777" /></div>
      </div>
      <div className="flex h-[271px] shrink-0">
        <div className="relative w-[368px] bg-white">
          <svg className="absolute top-0 left-0" width="368" height="120" viewBox="0 0 368 120" fill="none" stroke="#888" strokeWidth="1.300"><path d="M100 55.500 H111 M175 55.500 H195 M252 55.500 C262 55.500 260 47 270 47 M252 55.500 C268 58 248 90 270 90" /></svg>
          <FlowNode className="top-[49px] left-[33px] w-[68px] bg-[#bcd7ee]" icon="pi">Sense HAT Sim</FlowNode>
          <FlowNode className="top-[49px] left-[109px] w-[67px] bg-[#e6e0f8]" icon="clock">limit 1 msg/5s</FlowNode>
          <FlowNode className="top-[49px] left-[193px] w-[59px] bg-[#fdd0a2]" icon="function"><i>Env. Data</i></FlowNode>
          <div className="absolute top-[41px] left-[334px] h-[11px] w-[13px] rounded-[2px] border border-[#bbb] bg-[#eee]"><span className="absolute top-px right-px h-[7px] w-[8px] rounded-[1px] bg-[#87a980]" /></div>
          <FlowNode className="top-[40px] left-[269px] w-[67px] bg-[#87a980]" icon="debug" iconRight>msg.payload</FlowNode>
          <FlowNode className="top-[83px] left-[269px] w-[42px] bg-[#6d9fc5]" icon="iot" iconRight>event</FlowNode>
          <MiniPort className="top-[53px] left-[98px]" /><MiniPort className="top-[53px] left-[106px]" /><MiniPort className="top-[53px] left-[174px]" /><MiniPort className="top-[53px] left-[190px]" /><MiniPort className="top-[53px] left-[250px]" /><MiniPort className="top-[44px] left-[266px]" /><MiniPort className="top-[87px] left-[266px]" />
          <span className="absolute top-[63px] left-[36px] size-[5px] rounded-[1px] bg-[#5a8]" /><span className="absolute top-[63px] left-[43px] text-[5.100px] leading-[6px] text-[#888]">connected</span>
          <span className="absolute top-[63px] left-[111px] text-[5.100px] leading-[6px] text-[#888]">217</span>
          <span className="absolute top-[97px] left-[272px] size-[5px] rounded-[1px] bg-[#5a8]" /><span className="absolute top-[97px] left-[278px] text-[5.100px] leading-[6px] text-[#888]">connected</span>
          <div className="absolute top-[120px] left-0 flex h-[36px] w-[19px] items-center justify-center rounded-r-[3px] border border-l-0 border-[#ccc] bg-white"><svg width="6" height="9" viewBox="0 0 6 9"><path d="M5 1 L1.500 4.500 L5 8" stroke="#666" strokeWidth="1.500" fill="none" /></svg></div>
        </div>
        <div className="flex flex-1 flex-col items-center bg-[#f1f1f1]"><Tri dir="up" w={5} h={3} color="#333" className="mt-[5px]" /><div className="mt-[7px] h-[32px] w-[8px] bg-[#c1c1c1]" /><Tri dir="down" w={5} h={3} color="#333" className="mt-auto mb-[4px]" /></div>
      </div>
      <div className="flex h-[10px] shrink-0 items-center bg-[#f1f1f1]"><Tri dir="left" w={3} h={5} color="#999" className="ml-[3px]" /><div className="ml-[4px] h-[8px] w-[61px] bg-[#c1c1c1]" /><Tri dir="right" w={3} h={5} color="#333" className="mr-[15px] ml-auto" /></div>
      <div className="flex h-[18px] shrink-0 justify-end gap-[2.500px] border-t border-[#bbb] bg-[#f3f3f3] pt-[2px] pr-[8px]">
        <span className={btn}><FaMinus size={7} color="#777" /></span><span className={btn}><FaRegCircle size={8} color="#777" /></span><span className={btn}><FaPlus size={8} color="#777" /></span><span className={btn}><FaRegMap size={9} color="#777" /></span>
      </div>
    </div>
  );
}

function MiniRow({ indent, name, value }: { indent: string; name?: string; value?: string }) {
  return (
    <div className={"flex h-[15.500px] items-center " + indent}>
      {!value && <Tri dir="down" w={5} h={3} color="#444" className="mr-[2px]" />}
      <span className="whitespace-pre">{name && <><span className="text-[#792e90]">{name}</span>: </>}{value ? <span className="text-[#2033d6]">{value}</span> : <i className="text-[#666]">object</i>}</span>
    </div>
  );
}

function MiniMeta({ time, inline }: { time: string; inline?: boolean }) {
  return (
    <div className="pl-[2px] text-[7.900px] leading-[14.100px] whitespace-nowrap text-[#777]">
      <div>{time}<span className="ml-[6px] tracking-[-0.080px]">node:{inline && " ee0c7da5.77435"}</span></div>
      {!inline && <div>ee0c7da5.77435</div>}
      <div className="text-[#a66]">environment : msg.payload : Object</div>
    </div>
  );
}

function MiniSidebar() {
  const mono = "font-['DejaVu_Sans_Mono',monospace] text-[9.250px] pt-[1.800px] text-[#333]";
  return (
    <div className="flex w-[221px] shrink-0 flex-col border-l border-[#bbb] bg-white">
      <div className="flex h-[25px] shrink-0 border-b border-[#bbb]">
        <div className="mt-[2px] ml-[2px] flex h-[23px] w-[140px] items-center border-x border-t border-[#bbb] bg-white pb-[1px] pl-[8px]"><FaBug size={9} color="#777" /><span className="ml-[3px] text-[10px] font-bold tracking-[-0.100px] text-[#333]">debug</span></div>
        <div className="mt-[3px] ml-[7px] flex h-[20px] w-[20px] items-center justify-center border border-[#ccc] bg-[#f0f0f0]"><FaInfo size={7} color="#777" /></div>
        <div className="mt-[3px] ml-[4px] flex h-[20px] w-[20px] items-center justify-center border border-b-2 border-[#ccc] border-b-[#aaa]"><FaBug size={9} color="#777" /></div>
        <div className="mt-[3px] ml-[5px] flex h-[18px] w-[18px] items-center justify-center bg-[#f0f0f0]"><Tri dir="down" w={6} h={3} color="#777" /></div>
      </div>
      <div className="flex h-[30px] shrink-0 items-start border-b border-[#ddd] bg-[#f3f3f3] pt-[6px] text-[9.600px] text-[#888]">
        <div className="ml-[116px] flex h-[18px] w-[63px] items-center border border-[#ccc] bg-white pl-[6px] tracking-[-0.200px] whitespace-nowrap"><FaFilter size={7} /><span className="ml-[3px]">all nodes</span></div>
        <div className="ml-[6px] flex h-[18px] w-[20px] items-center justify-center border border-[#ccc] bg-white"><FaTrashAlt size={7} /></div>
      </div>
      <div className="flex h-[251px] shrink-0 bg-[#f3f3f3]">
        <div className="ml-[5px] h-full w-[198px] overflow-hidden bg-white">
          <div className="h-[142px] border-b border-[#eee] pt-[1.500px]"><MiniMeta time="4/22/2020, 10:33:06 AM" /><div className={mono}><MiniRow indent="pl-[7px]" /><MiniRow indent="pl-[8px]" name="Data" /><MiniRow indent="pl-[18px]" name="Environment" /><MiniRow indent="pl-[36px]" name="temperature" value="20" /><MiniRow indent="pl-[36px]" name="humidity" value="80" /><MiniRow indent="pl-[36px]" name="pressure" value="1000" /></div></div>
          <div className="h-[64px] border-b border-[#eee] pt-[0.500px]"><MiniMeta time="4/22/2020, 10:33:11 AM" /><div className={mono}><CollapsedRow name="Data" /></div></div>
          <div className="pt-[0.500px]"><MiniMeta time="4/22/2020, 10:33:16 AM" inline /><div className={mono}><CollapsedRow name="Data" /></div></div>
        </div>
        <div className="ml-auto flex w-[11px] flex-col items-center bg-[#f1f1f1]"><Tri dir="up" w={5} h={3} color="#999" className="mt-[4px]" /><div className="mt-[4px] h-[43px] w-[8px] bg-[#c1c1c1]" /><Tri dir="down" w={5} h={3} color="#333" className="mt-auto mb-[4px]" /></div>
      </div>
      <div className="flex h-[18px] shrink-0 justify-end border-t border-[#bbb] bg-[#f3f3f3] pt-[2px] pr-[8px]"><span className="flex h-[13px] w-[13px] items-center justify-center border border-[#ccc] bg-white"><FaDesktop size={8} color="#777" /></span></div>
    </div>
  );
}

function WinButtons() {
  return (
    <svg width="40" height="12" viewBox="0 0 40 12" className="shrink-0"><g fill="#73716b"><circle cx="6" cy="6" r="5.200" /><circle cx="20" cy="6" r="5.200" /><circle cx="34" cy="6" r="5.200" /></g><path d="M3.500 6 H8.500 M18 4 H22 V8 H18Z M32 4 L36 8 M36 4 L32 8" stroke="#3c3b37" fill="none" /></svg>
  );
}

function TerminalIcon() {
  return (
    <svg className="shrink-0" width="23" height="19" viewBox="0 0 23 19"><rect width="23" height="19" fill="#4c4f52" /><rect width="23" height="4" fill="#3f63c8" /><path d="M3 8 L7 11 L3 14 M8 15 H13" stroke="#ddd" fill="none" /></svg>
  );
}

function RaspbianWindow() {
  return (
    <div className="absolute top-[43px] left-[54px] flex h-[496px] w-[731px] flex-col overflow-hidden rounded-t-[5px] bg-[#efebe7] shadow-[0_0_6px_#0008]">
      <div className="flex h-[21px] shrink-0 items-center bg-[#3f3e3a] font-['Noto_Sans',sans-serif] text-[10.400px] font-bold text-[#8b8983]">
        <span className="ml-[254px] w-[433px] tracking-[-0.110px] whitespace-nowrap">raspbian_1 [Running] - Oracle VM VirtualBox</span><WinButtons />
      </div>
      <div className="flex h-[15px] shrink-0 items-center bg-[#f2efeb] pt-px font-['Noto_Sans',sans-serif] text-[9.800px] font-medium text-black">
        <span className="ml-[6.500px] w-[27.500px]">File</span><span className="w-[50px]">Machine</span><span className="w-[34px]">View</span><span className="w-[36px]">Input</span><span className="w-[47px]">Devices</span><span>Help</span>
      </div>
      <div className="flex h-[26px] shrink-0 items-center bg-[#eeedec] font-['Roboto',sans-serif] text-[11px] text-[#333]">
        <svg className="ml-[4px] shrink-0" width="22" height="22" viewBox="0 0 22 22"><circle cx="11" cy="11" r="10.500" fill="#eee" stroke="#aaa" /><circle cx="11" cy="12.500" r="5" fill="#b8123f" /><circle cx="7.500" cy="11" r="2.500" fill="#8e0f31" /><circle cx="14.500" cy="11" r="2.500" fill="#8e0f31" /><path d="M6 5 Q10 4 11 8 Q12 4 16 5 Q15 9 11 8.500 Q7 9 6 5Z" fill="#4f9a3c" /></svg>
        <svg className="ml-[9px] shrink-0" width="21" height="21" viewBox="0 0 21 21" fill="none"><circle cx="10.500" cy="10.500" r="10" fill="#5b93d4" stroke="#3d6ea8" /><path d="M1 7 H20 M1 14 H20 M10.500 0 V21 M5 2 Q2 10.500 5 19 M16 2 Q19 10.500 16 19" stroke="#b9d6f2" /></svg>
        <svg className="ml-[6px] shrink-0" width="22" height="20" viewBox="0 0 22 20" stroke="#a8925a" strokeWidth=".8"><path d="M1 1 H7 L9 4 H14 V16 H1Z" fill="#efe2b4" /><path d="M5 6 H11 L13 8 H21 V19 H5Z" fill="#f3e6b8" /></svg>
        <span className="ml-[5px] flex"><TerminalIcon /></span>
        <div className="ml-[7px] flex h-[24px] w-[140px] items-center rounded-[2px] border border-[#999] bg-[#c4c1be]"><svg className="ml-[3px] shrink-0" width="20" height="20" viewBox="0 0 20 20"><circle cx="10" cy="10" r="9.500" fill="#6ea2ee" /><path d="M10 5 H19 A9.500 9.500 0 0 1 10 19.500 L14 12Z" fill="#a8c8f8" /><path d="M2 6 A9.500 9.500 0 0 1 18.500 5.500 H10Z" fill="#4679d2" /><circle cx="10" cy="10" r="4.200" fill="#3f73dc" stroke="#fff" strokeWidth="1.500" /></svg><span className="ml-[2px] pt-px text-[11.200px] whitespace-nowrap">Node-RED - Chromiu...</span></div>
        <div className="ml-px flex h-[24px] w-[140px] items-center rounded-[2px] border border-[#999] bg-[#e9e7e5]"><span className="ml-px flex"><TerminalIcon /></span><span className="ml-[2px] pt-px whitespace-nowrap">[pi@raspberry: ~]</span></div>
        <FaBluetoothB className="ml-[162px] shrink-0" size={16} color="#bbb" />
        <svg className="ml-[11px] shrink-0" width="17" height="18" viewBox="0 0 17 18" fill="none" stroke="#2ea4ee" strokeWidth="2"><path d="M4.500 17 V2 M1 5.500 L4.500 1.500 L8 5.500 M12.500 1 V16 M9 12.500 L12.500 16.500 L16 12.500" /></svg>
        <FaVolumeUp className="ml-[8px] shrink-0" size={16} color="#5bbdf0" />
        <span className="ml-[8px] h-[22px] w-[32px] border border-[#333] bg-[#cfcfcf] pr-[3px] text-right font-['DejaVu_Sans_Mono',monospace] text-[8px] leading-[21px] tracking-[-0.200px] whitespace-pre text-[#222]">2 %</span>
        <span className="ml-[4px] w-[38px] pt-px tracking-[-0.200px]">10:35</span>
        <svg width="12" height="12" viewBox="0 0 12 12" fill="#aaa"><path d="M6 0 L12 8 H0Z M0 9.500 H12 V12 H0Z" /></svg>
      </div>
      <div className="flex h-[19px] shrink-0 items-center bg-[#4d97f3] pt-px font-['Roboto',sans-serif] text-[11px] text-[#e3eefc]">
        <span className="ml-[308px] w-[376px] tracking-[0.220px]">Node-RED - Chromium</span>
        <svg width="42" height="10" viewBox="0 0 42 10" fill="none" stroke="#fff" strokeWidth="1.400"><path d="M0 8 H6 M17 4 H21 V8 H17Z M19 4 V2 H23 V6 H21 M35 2 L40 8 M40 2 L35 8" /></svg>
      </div>
      <div className="relative flex h-[21px] shrink-0 items-center bg-[#eee] font-['Noto_Sans',sans-serif] text-[9.800px] text-[#444]">
        <svg className="absolute top-0 left-0" width="310" height="21" viewBox="0 0 310 21"><path d="M0 20.500 L4 20.500 L12 1 H139 L148 20.500 H731" fill="#f8f8f8" stroke="#bbb" /><path d="M143 10 L147 1 H273 L282 20 H149Z" fill="#cfcfcf" stroke="#aaa" /><path d="M281 5 H299 L305 17 H288Z" fill="#c9c9c9" /></svg>
        <span className="relative ml-[14px] flex"><NodeRedMark size={12} /></span><span className="relative ml-[5px] w-[97px]">Node-RED</span><CloseX className="relative" size={7} sw={1} color="#666" />
        <span className="relative ml-[14px] flex"><Face size={12} /></span><span className="relative ml-[4px] w-[98px] tracking-[0.100px] whitespace-nowrap text-[#777] [mask-image:linear-gradient(90deg,#000_75%,transparent_95%)]">Membina Aplikasi</span><CloseX className="relative" size={7} sw={1} color="#888" />
      </div>
      <div className="flex h-[26px] shrink-0 items-center border-b border-[#999] bg-[#f4f4f4] font-['Noto_Sans',sans-serif] text-[9.800px]">
        <svg className="ml-[7px] shrink-0" width="50" height="12" viewBox="0 0 50 12" fill="none" strokeWidth="1.400"><path d="M10 6 H1 M5 2 L1 6 L5 10" stroke="#666" /><path d="M20 6 H29 M25 2 L29 6 L25 10" stroke="#ccc" /><path d="M48 3 A4.500 4.500 0 1 0 48.500 8 M49 1 V4.500 H45.500" stroke="#666" /></svg>
        <div className="ml-[7px] flex h-[19px] w-[619px] items-center border border-[#bbb] bg-white">
          <svg className="ml-[4px] shrink-0" width="11" height="11" viewBox="0 0 11 11" fill="none" stroke="#777"><circle cx="5.500" cy="5.500" r="4.700" /><path d="M5.500 5 V8 M5.500 2.800 V4" /></svg>
          <span className="ml-[4px] w-[568px] pt-px text-[#222]">localhost<span className="text-[#999]">:1880/#flow/b4e1d575.15b038</span></span>
          <FaKey className="rotate-[-45deg]" size={8} color="#777" /><FaRegStar className="ml-[6px]" size={10} color="#777" />
        </div>
        <svg className="ml-[8px]" width="10" height="12" viewBox="0 0 10 12"><path d="M0 1.500 L5 0 L10 1.500 Q10 9 5 12 Q0 9 0 1.500Z" fill="#7d0d12" /><path d="M2.500 3.500 V6 Q4.500 8 4.700 5.500 V3.500 M6.700 4 A1.400 1.400 0 1 1 6.600 4Z" stroke="#fff" strokeWidth=".8" fill="none" /></svg>
        <svg className="ml-[16px]" width="3" height="12" viewBox="0 0 3 12" fill="#777"><circle cx="1.500" cy="2" r="1" /><circle cx="1.500" cy="6" r="1" /><circle cx="1.500" cy="10" r="1" /></svg>
      </div>
      <div className="flex h-[28px] shrink-0 items-center bg-black font-['DejaVu_Sans',sans-serif]">
        <span className="ml-[13px] pt-1"><NodeRedLogo w={33} h={13} /></span>
        <span className="ml-[7px] w-[80px] pt-[1px] font-['Noto_Sans',sans-serif] text-[11.500px] text-[#aaa]">Node-RED</span>
        <div className="ml-[455px] flex h-[22px] w-[89px] items-center bg-[#444]"><span className="ml-[5px]"><DeployGlyph w={20} h={13} /></span><span className="ml-[7px] w-[45px] text-[10px] text-[#999]">Deploy</span><Tri dir="down" w={7} h={4} color="#ddd" /></div>
        <svg className="ml-[28px]" width="12" height="11" viewBox="0 0 12 11"><path d="M0 1.500 H12 M0 5.500 H12 M0 9.500 H12" stroke="#eee" strokeWidth="2" /></svg>
      </div>
      <div className="flex h-[324px] shrink-0 bg-[#f3f3f3] font-['DejaVu_Sans',sans-serif]">
        <MiniPalette /><MiniWorkspace />
        <div className="flex w-[4px] shrink-0 items-center"><span className="ml-px h-[35px] w-[2px] bg-[#ccc]" /></div>
        <MiniSidebar />
      </div>
      <div className="flex flex-1 items-center pt-[2px] font-['Noto_Sans',sans-serif] text-[10.500px] font-medium text-[#111]">
        <svg className="ml-[530px] shrink-0" width="146" height="12" viewBox="0 0 146 12" strokeWidth="1.200">
          <g fill="#4d96e6" stroke="#15559e"><rect x="1.500" y="1.500" width="8.500" height="9" rx="1.500" /><rect x="27" y="1" width="5" height="6" /><rect x="32" y="5" width="4" height="6" fill="#bbb" stroke="#888" /><rect x="44" y="1" width="6" height="5" /><rect x="40.500" y="6" width="6" height="5" fill="#fff" /><path d="M55 9 L61 2 L64 4 L58 11Z" fill="#aed4f5" /><rect x="81.500" y="2" width="9" height="8" /><rect x="95" y="4" width="6" height="6" /><rect x="99" y="2" width="6" height="5" /><rect x="108" y="1.500" width="8.500" height="9" rx="1.500" fill="#7a7cd8" stroke="#4a45a8" /></g>
          <circle cx="19" cy="6" r="4.500" fill="#eee" stroke="#bbb" /><path d="M68 4 L74 2.500 H78 V10 H68Z" fill="#ddd" stroke="#aaa" />
          <circle cx="126" cy="6" r="4.500" fill="#c8edb8" stroke="#2d78a8" /><path d="M124 3 L128 6 L125 10" stroke="#2d9c3a" fill="none" strokeWidth="2" />
          <rect x="134.500" y="1.500" width="9" height="9" rx="1" fill="#fff" stroke="#274a70" /><path d="M139 3 V8 M137 6 H141 L139 8.500Z" stroke="#111" fill="#111" strokeWidth="1.300" />
          <path d="M4 4 H8 L4 8 H8 M110.500 3.500 V6.500 Q112.300 9 114 6.500 V3.500" stroke="#fff" fill="none" />
        </svg>
        <span className="ml-[2px] tracking-[-0.100px] whitespace-nowrap">Left Alt</span>
      </div>
    </div>
  );
}

const dockIcons = [
  <svg width="32" height="33" viewBox="0 0 32 33"><circle cx="16" cy="17" r="15.500" fill="#ff5b3a" /><path d="M1 14 Q2 6 7 3 L9 7 Q14 5 17 7 L19 0 Q31 7 31.500 18 Q31 25 26 29 Q30 14 20 12Z" fill="#ffbf2e" /><path d="M3 24 Q9 33 18 32.500 Q26 31 29 24 Q20 30 12 25Z" fill="#ee2a6a" /><circle cx="16.500" cy="17.500" r="6.500" fill="#6b3bc8" /><path d="M4 12 Q10 10 14 13 Q10 15 10 19 Q5 18 4 12Z" fill="#ff9a2a" /></svg>,
  <svg width="34" height="33" viewBox="0 0 34 33"><circle cx="18" cy="16.500" r="15.500" fill="#1f6fc8" /><path d="M4 8 Q14 -2 27 4 Q20 4 16 10 Q8 8 4 8Z" fill="#49a6ee" /><path d="M2 13 Q8 12 13 17 L25 15 L26 25 Q19 29 12 26 Q3 24 2 13Z" fill="#f3f6fa" /><path d="M11 17 L19 21 L25 15" stroke="#b3bfd0" fill="none" /></svg>,
  <svg width="30" height="32" viewBox="0 0 30 32"><path d="M2 8 Q-1 16 2 24 M28 8 Q31 16 28 24" stroke="#3e587e" strokeWidth="2" fill="none" /><rect x="4" y="1" width="21" height="30" rx="5" fill="#e9e9e7" stroke="#bbb" /><circle cx="14.500" cy="14" r="8" fill="#333" /><circle cx="14.500" cy="14" r="5" fill="#e6c21e" /><circle cx="14.500" cy="14" r="2" fill="#333" /></svg>,
  <svg width="28" height="33" viewBox="0 0 28 33"><path d="M1 1 H17 L27 9 V32 H1Z" fill="#f4f8fb" stroke="#0c6a9e" strokeWidth="2" /><path d="M17 0 H28 V9Z" fill="#1278b3" /><path d="M6 13 H12 M6 17 H12 M6 21 H22 M6 25 H22 M6 28 H17" stroke="#16618f" strokeWidth="1.500" /><rect x="14" y="12" width="9" height="7" fill="#3ba1d4" /></svg>,
  <svg width="31" height="30" viewBox="0 0 31 30"><path d="M10 8 V4 Q10 1 15.500 1 Q21 1 21 4 V8" stroke="#c74a1c" strokeWidth="2.500" fill="none" /><rect x="0" y="6" width="31" height="24" rx="1.500" fill="#f0733a" /><rect x="0" y="6" width="31" height="5" fill="#de5a28" /><path d="M9 26 L15.500 12 L22 26 M10 22 H21" stroke="#fff" strokeWidth="2.800" fill="none" /></svg>,
  <svg width="29" height="29" viewBox="0 0 29 29"><circle cx="14.500" cy="14.500" r="14" fill="#3f7dbb" stroke="#6fa5d8" /><path d="M10 11 Q10 6.500 14.500 6.500 Q19 6.500 19 10.500 Q19 13 16.500 14.500 Q14.500 16 14.500 18 M14.500 20.500 V23.500" stroke="#fff" strokeWidth="3" fill="none" /></svg>,
  <svg width="30" height="32" viewBox="0 0 30 32"><path d="M3 1 H27 L29 12 V29 Q29 31 27 31 H3 Q1 31 1 29 V12Z" fill="#aba9a4" /><rect x="4" y="4" width="22" height="9" fill="#4a4844" /><path d="M5 7 H25 V12 H5Z" fill="#e8772c" /><rect x="5" y="6" width="20" height="1.500" fill="#f6d9b8" /><rect x="10" y="19" width="9" height="7" rx="2" fill="#eee" stroke="#555" strokeWidth="1.500" /></svg>,
  <svg width="34" height="33" viewBox="0 0 34 33"><rect width="34" height="33" rx="2" fill="#333940" /><path d="M9 33 Q1 22 6 12 Q12 2 22 4 Q33 8 31 19 Q28 28 20 25 Q14 21 18 15" stroke="#f0224c" strokeWidth="6" fill="none" /><path d="M8 30 Q3 20 8 12 Q14 4 23 6" stroke="#ff6f86" strokeWidth="1.500" fill="none" /></svg>,
  <svg width="33" height="32" viewBox="0 0 33 32"><rect width="33" height="32" rx="3" fill="#1679e0" /><rect x="3.500" y="3.500" width="26" height="25" fill="#2c8cf0" stroke="#fff" strokeWidth="1.500" /><path d="M4 14 H8 L12 22 L15 9 L19 18 L23 9 L25 19 H29" stroke="#fff" strokeWidth="2.200" fill="none" /></svg>,
  <TeamViewerLogo size={34} />,
  <svg width="32" height="16" viewBox="0 0 32 16"><rect x="1" y="1" width="30" height="26" fill="#3b3a3c" stroke="#999" strokeWidth="2" /><path d="M5 7 L9 10 L5 13 M10 14 H15" stroke="#aaa" fill="none" strokeWidth="1.300" /></svg>,
  <svg width="22" height="22" viewBox="0 0 22 22" fill="#fff">{[2.500, 11, 19.500].map((y) => [2.500, 11, 19.500].map((x) => <circle key={x + "-" + y} cx={x} cy={y} r="2.200" />))}</svg>,
];
const dockSlots = ["h-[44px]", "h-[47px]", "h-[42px]", "h-[50px]", "h-[43px]", "h-[46px]", "h-[41px]", "h-[52px]", "h-[34px]", "h-[56px]", "h-[26px]", "h-[34px]"];
const dockDots = [3, 0, 0, 0, 0, 0, 3, 1, 1, 4, 1, 0];

function Dock() {
  return (
    <div className="flex h-[520px] w-[47px] shrink-0 flex-col bg-[linear-gradient(#563b3f,#3d2c33)]">
      {dockIcons.map((icon, i) => (
        <div key={i} className={"flex shrink-0 items-center " + dockSlots[i] + (i === 3 ? " mx-[1px] rounded-[3px] bg-white/10" : "")}>
          <span className="ml-px flex w-[5px] flex-col gap-[2px]">{Array.from({ length: dockDots[i] }, (_, k) => <span key={k} className="size-[4px] rounded-full bg-[#e2531f]" />)}</span>
          <span className="flex w-[34px] justify-center">{icon}</span>
        </div>
      ))}
    </div>
  );
}

function TeamViewerPanel() {
  return (
    <div className="absolute top-[71px] left-[785px] flex h-[188px] w-[172px] flex-col bg-[#fafafa] font-['Liberation_Sans',sans-serif] shadow-[0_0_3px_#0006]">
      <div className="h-[55px] shrink-0 bg-[#0b65c9] text-white">
        <div className="flex h-[39px] items-center pl-[6px]"><TeamViewerLogo size={28} /><span className="ml-[6px] w-[113px] font-['Open_Sans',sans-serif] text-[14.500px] tracking-[0.100px]"><b>Team</b>Viewer</span><CloseX size={9} sw={2.200} /></div>
        <div className="pl-[6px] text-[9.100px] leading-[13px] whitespace-nowrap">Free license (non-commercial use only)</div>
      </div>
      <div className="flex h-[20px] shrink-0 items-center bg-[#e8ebf0] text-[10.400px] font-bold text-[#444]"><Tri dir="down" w={6} h={5} color="#222" className="ml-[8px]" /><span className="ml-[7px]">Session list</span></div>
      <div className="flex h-[70px] shrink-0 pt-[5px] text-[#555]">
        <svg className="mt-[5px] ml-[8px]" width="12" height="12" viewBox="0 0 12 12"><rect width="12" height="8.500" fill="#1c81e0" /><path d="M4 9 H8 V10.500 H10 V11.500 H2 V10.500 H4Z" fill="#666" /></svg>
        <div className="ml-[6px] w-[130px] whitespace-nowrap"><div className="text-[10.200px] leading-[13px] tracking-[0.150px]">LAPTOP-77H474IM</div><div className="text-[8.600px] leading-[10px]">(1 452 596 998)</div></div>
        <svg className="mt-[7px] ml-px" width="9" height="9" viewBox="0 0 9 9"><path d="M0 0 L9 3 L5.500 4.500 L9 8 L8 9 L4.500 5.500 L3 9Z" fill="#4a9df0" /></svg>
      </div>
      <div className="flex h-[19px] shrink-0 items-center bg-[#e8ebf0] text-[10.400px] font-bold text-[#444]"><Tri dir="right" w={5} h={6} color="#222" className="ml-[9px]" /><span className="ml-[7px]">Chat</span></div>
      <div className="flex flex-1 items-center justify-end bg-[#1e232b] pr-[6px] text-[10.600px] text-white underline">www.teamviewer.com</div>
    </div>
  );
}

function RemoteDesktop() {
  return (
    <div className="relative h-[539px] w-[958px] shrink-0 overflow-hidden bg-[#ece8e4]">
      <div className="flex h-[19px] items-center bg-[linear-gradient(#55534d,#403f3b)] font-['Noto_Sans',sans-serif] text-[10.300px] font-bold text-[#dfdbd2]">
        <span className="ml-[9px] w-[61px] tracking-[-0.100px]">Activities</span>
        <svg width="11" height="11" viewBox="0 0 34 33"><path d="M9 33 Q1 22 6 12 Q12 2 22 4 Q33 8 31 19 Q28 28 20 25 Q14 21 18 15" stroke="#f0224c" strokeWidth="7" fill="none" /></svg>
        <span className="ml-[5px] w-[102px] tracking-[-0.150px] whitespace-nowrap">VirtualBox Machine</span><Tri dir="down" w={6} h={4} color="#dfdbd2" />
        <span className="ml-[284px] w-[53px] tracking-[-0.200px] whitespace-nowrap">Wed 17:35</span><span className="size-[6px] rounded-full bg-[#dfdbd2]" />
        <TeamViewerLogo size={15} className="ml-[330px]" />
        <FaVolumeUp className="ml-[21px]" size={11} /><FaPowerOff className="ml-[10px]" size={10} /><Tri dir="down" w={6} h={3} color="#dfdbd2" className="ml-[8px]" />
      </div>
      <div className="flex">
        <Dock />
        <div className="flex flex-1 flex-col">
          <div className="flex h-[20px] items-center border-b border-[#2b2a27] bg-[#3f3e3a] pt-px font-['Noto_Sans',sans-serif] text-[10.400px] font-bold text-[#c9c5bb]">
            <span className="ml-[377px] w-[491px] tracking-[-0.110px] whitespace-nowrap">Oracle VM VirtualBox Manager</span><WinButtons />
          </div>
          <div className="flex h-[500px]">
            <div className="flex w-[7px] flex-col bg-[#f2f0ee] pt-[62px]">
              {[0, 1, 2, 3, 4, 5].map((i) => <span key={i} className="mb-[17px] ml-[4px] h-[15px] w-[2px] bg-[#333]" />)}
              <span className="mt-[26px] ml-px h-[30px] w-[5px] bg-[#2b83d6]" />
            </div>
            <div className="ml-[731px] flex w-[163px] flex-col overflow-hidden">
              <div className="mt-[16px] flex h-[17px] shrink-0">
                <div className="ml-[8px] flex w-[78px] items-center justify-center rounded-t-[2px] border border-b-0 border-[#aaa] bg-[#d6d2ce]"><svg width="20" height="14" viewBox="0 0 20 14"><path d="M5 3 L8 1 L14 2 L19 8 L15 9 L14 7 L10 9 L9 5Z" fill="#555" /><path d="M1 13 Q4 10 7 13 M10 8 L6 12" stroke="#2b7fd0" strokeWidth="1.500" fill="none" /></svg></div>
                <div className="w-[9px] border border-b-0 border-[#aaa] bg-[#d6d2ce]" />
                <svg className="ml-[24px]" width="22" height="14" viewBox="0 0 22 14" fill="#ddd" stroke="#444"><path d="M1.500 1 H6 V6 H5 V14 H3 V6 H1.500Z M9 1 H13 V14 H9Z M16 1 V5 L18 7 V14 H20 V7 L21.500 5 V1 L20 4 H17.500Z" /></svg>
              </div>
              {[
                ["h-0", "h-[223px]"], ["h-[18px]", "h-[63px]"], ["h-[18px]", "h-[28px]"], ["h-[18px]", "h-[15px]"], ["h-[18px]", "h-[27px]"], ["h-[18px]", "h-[20px]"],
              ].map(([head, body], i) => (
                <div key={i} className="mb-[2px] shrink-0 overflow-hidden rounded-r-[5px] border border-l-0 border-[#bbb]">
                  <div className={"bg-[linear-gradient(#e9e6e2,#d9d5d0)] " + head} /><div className={"bg-white " + body} />
                </div>
              ))}
            </div>
            <div className="ml-px flex w-[9px] flex-col items-center border-l border-[#c5c1bc] bg-[#f4f2ef]"><div className="mt-[446px] h-[40px] w-full border-t border-[#bbb] bg-[#e4e0dc]" /><Tri dir="down" w={5} h={4} color="#333" className="mt-[6px]" /></div>
          </div>
        </div>
      </div>
      <RaspbianWindow />
      <div className="absolute top-[124px] left-[767px] flex h-[40px] w-[18px] items-start justify-center bg-white pt-[7px] [clip-path:polygon(0_0,100%_0,100%_100%,0_75%)]"><svg width="6" height="9" viewBox="0 0 6 9"><path d="M1 1 L4.500 4.500 L1 8" stroke="#567" strokeWidth="1.400" fill="none" /></svg></div>
      <div className="absolute top-[167px] left-[52px] flex h-[18px] w-[103px] items-center rounded-[3px] bg-[#22282a]/90 pl-[8px] font-['Noto_Sans',sans-serif] text-[10.300px] whitespace-nowrap text-[#eee]">LibreOffice Writer</div>
      <TeamViewerPanel />
    </div>
  );
}

function TeamViewerToolbar() {
  const label = "tracking-[-0.300px] whitespace-nowrap";
  return (
    <div className="mt-px ml-[176px] flex h-[45px] w-[605px] shrink-0 items-center border-b-2 border-[#d8d8d8] bg-[#f1f1f1] pt-[2px] font-['Open_Sans',sans-serif] text-[14.800px] text-black">
      <CloseX className="ml-[11px]" size={24} sw={3} color="#4a4a4a" />
      <svg className="ml-[22px] shrink-0" width="20" height="24" viewBox="0 0 20 24"><path d="M6 0 H18 L12 9 H20 L5 24 L9 13 H0Z" fill="#efc680" /></svg>
      <span className={"ml-[10px] w-[56px] " + label}>Actions</span><Tri dir="down" w={9} h={5} color="#888" />
      <svg className="ml-[14px] shrink-0" width="27" height="25" viewBox="0 0 27 25" fill="none"><rect x="2" y="2" width="17" height="12" rx="1" stroke="#4a80bd" strokeWidth="3" fill="#f5f8fb" /><path d="M2 24 L9 17 L18 17 L16 24Z" fill="#4a80bd" /><path d="M26 6 L18 15 L14 22 L20 18 L26 13Z" fill="#444" /></svg>
      <span className={"ml-[7px] w-[37px] " + label}>View</span><Tri dir="down" w={9} h={5} color="#888" />
      <svg className="ml-[15px] shrink-0" width="28" height="25" viewBox="0 0 28 25"><path d="M2 3 Q0 17 11 23 L20 25 L22 20 L16 16 L13 19 Q6 14 7 8 L9 4Z" fill="#4a80bd" /><rect x="14" y="1" width="13" height="9" rx="2" fill="#fff" stroke="#888" /><path d="M10 7 H20 V14 H15 L12 17 V14 H10Z" fill="#fff" stroke="#888" /></svg>
      <span className={"ml-[6px] w-[99px] " + label}>Communicate</span><Tri dir="down" w={9} h={5} color="#888" />
      <svg className="ml-[14px] shrink-0" width="28" height="25" viewBox="0 0 28 25"><path d="M1.500 1 H10 L15 6 V20 H1.500Z" fill="#fafafa" stroke="#666" strokeWidth="1.500" /><path d="M10 1 V6 H15" stroke="#666" fill="none" /><path d="M12 14 H16 Q15 10 18 10 Q21 10 20 14 H25 V17 Q28 17 28 19 Q28 21 25 21 V25 H20 Q18 21 17 25 H12Z" fill="#6fa896" /></svg>
      <span className={"ml-[7px] w-[94px] " + label}>Files &amp; Extras</span><Tri dir="down" w={9} h={5} color="#888" />
      <svg className="ml-[19px] shrink-0" width="21" height="21" viewBox="0 0 21 21"><circle cx="10.500" cy="10.500" r="10.300" fill="#fbd50a" /><ellipse cx="7.500" cy="6.500" rx="1.300" ry="2.800" fill="#4c3200" /><ellipse cx="13.500" cy="6.500" rx="1.300" ry="2.800" fill="#4c3200" /><path d="M3.500 11 Q10.500 13.500 17.500 11 Q16.500 17.500 10.500 17.500 Q4.500 17.500 3.500 11Z" fill="#6b3b00" /><path d="M4.500 12 Q10.500 14 16.500 12 L16 13.500 Q10.500 15.500 5 13.500Z" fill="#fff" /></svg>
    </div>
  );
}

function TeamViewerWindow() {
  return (
    <div className="flex h-[1030px] w-[959px] shrink-0 flex-col border-t border-r border-[#a8a8a8] bg-[#191919]">
      <div className="relative flex h-[38px] shrink-0 items-center bg-white font-['Open_Sans',sans-serif] text-[14.500px] text-black">
        <TeamViewerLogo size={20} className="ml-[3px]" />
        <span className="ml-[6px] h-full w-[2px] bg-[#d6d6d6]" />
        <span className="ml-[9px] w-[133px] tracking-[-0.580px] whitespace-nowrap">megatazm-desktop</span>
        <CloseX size={11} sw={3} color="#111" />
        <span className="ml-[11px] h-full w-[2px] bg-[#d6d6d6]" />
        <svg className="ml-[14px]" width="15" height="15" viewBox="0 0 15 15"><path d="M7.500 0 V15 M0 7.500 H15" stroke="#000" strokeWidth="3" /></svg>
        <span className="absolute bottom-0 left-[104px] flex"><Tri dir="up" w={16} h={7} color="#8a8a8a" /></span>
        <svg className="mr-[21px] mb-[2px] ml-auto" width="194" height="14" viewBox="0 0 194 14" fill="none" stroke="#8d8d8d"><path d="M2 3 H6 M2 8 H6 M5.500 11.500 H14" stroke="#111" strokeWidth="1.800" strokeDasharray="2.500 1" /><path d="M61 7.500 H74 M120.500 1.500 H132.500 V13 H120.500Z M179 1 L191 13 M191 1 L179 13" /></svg>
      </div>
      <TeamViewerToolbar />
      <div className="ml-[686px] flex h-[23px] w-[64px] shrink-0 items-center border-b-2 border-[#ccc] bg-[#eee]">
        <svg width="17" height="21" viewBox="0 0 17 21"><rect width="17" height="21" fill="#c4c4c4" /><path d="M2 4 H16 M2 8 H16 M2 12 H16 M2 16 H16" stroke="#fff" strokeWidth="2.500" strokeDasharray="2.500 1.500" /></svg>
        <svg className="ml-[5px]" width="13" height="13" viewBox="0 0 13 13" stroke="#666" fill="none" strokeWidth="1.300"><path d="M1 4 V1 H4 M1 1 L5 5 M9 1 H12 V4 M12 1 L8 5 M1 9 V12 H4 M1 12 L5 8 M12 9 V12 H9 M12 12 L8 8" /></svg>
        <svg className="ml-[6px]" width="18" height="10" viewBox="0 0 18 10"><path d="M1 9 L9 2 L17 9" stroke="#555" strokeWidth="3" fill="none" /></svg>
      </div>
      <div className="h-[181px] shrink-0" />
      <RemoteDesktop />
    </div>
  );
}

/* ---------- Taskbar ---------- */

function AdobeTile({ text, cls, ml }: { text: string; cls: string; ml: string }) {
  return <span className={"mt-[11px] flex h-[28px] w-[28px] shrink-0 items-center justify-center border-[1.500px] text-[15px] leading-[20px] font-semibold tracking-[-0.500px] " + cls + " " + ml}>{text}</span>;
}

function Taskbar() {
  return (
    <div className="flex h-[31px] shrink-0 items-start overflow-hidden bg-[linear-gradient(90deg,#e8d8d8_0,#e6d6d6_46%,#d7d7d7_52%)] font-['Open_Sans',sans-serif] text-black">
      <svg className="mt-[15px] ml-[6px] shrink-0" width="20" height="20" viewBox="0 0 20 20"><path d="M0 3 L8.500 1.500 V9.500 H0Z M9.500 1.300 L20 0 V9.500 H9.500Z M0 10.500 H8.500 V18.500 L0 17Z M9.500 10.500 H20 V20 L9.500 18.700Z" fill="#000" /></svg>
      <div className="ml-[20px] flex h-[50px] w-[430px] shrink-0 items-center border border-[#c5bcbc] bg-white">
        <svg className="ml-[17px]" width="18" height="20" viewBox="0 0 18 20" fill="none" stroke="#111" strokeWidth="1.500"><circle cx="10" cy="7.500" r="6.500" /><path d="M6 12.500 L1 19" /></svg>
        <span className="ml-[14px] text-[18px] tracking-[-0.120px] whitespace-nowrap text-[#333]">Type here to search</span>
      </div>
      <svg className="mt-[15px] ml-[20px] shrink-0" width="20" height="20" viewBox="0 0 20 20" fill="none" stroke="#111" strokeWidth="1.400"><path d="M1 0 V3 H13 V0 M1 6 H13 V14 H1Z M1 20 V17 H13 V20 M18.500 0 V5 M18.500 10 V20" /><path d="M17 7.500 H20" strokeWidth="3" /></svg>
      <svg className="mt-[11px] ml-[38px] shrink-0" width="30" height="22" viewBox="0 0 30 22"><path d="M0 9 L15 0 L30 9 V22 H0Z" fill="#0c59a4" /><path d="M0 9 H30 V22 H0Z" fill="#31b1ef" /><path d="M1 9 H29 L15 19Z" fill="#f4f6f8" /></svg>
      <div className="ml-[17px] flex h-[31px] w-[61px] shrink-0 justify-center bg-[#f4eeee] pt-[11px]">
        <svg width="28" height="28" viewBox="0 0 28 28"><circle cx="14" cy="14" r="13.500" fill="#fdc92e" /><path d="M2.300 7.300 A13.500 13.500 0 0 1 25.700 7.300 H14 L8 17Z" fill="#e2453a" /><path d="M2.300 7.300 L8.200 17.400 L14 27.500 A13.500 13.500 0 0 1 2.300 7.300Z" fill="#279f57" /><circle cx="14" cy="14" r="6.200" fill="#4a86f0" stroke="#fff" strokeWidth="1.800" /></svg>
      </div>
      <svg className="mt-[12px] ml-[18px] shrink-0" width="28" height="20" viewBox="0 0 28 20"><path d="M0 1 Q0 0 1 0 H12 L14 3 H27 V20 H0Z" fill="#fbd05b" /><path d="M0 1 Q0 0 1 0 H12 L13 4 H0Z" fill="#d99a14" /><path d="M5 14 Q5 12 7 12 H21 Q23 12 23 14 V20 H5Z" fill="#3b97d9" /><path d="M10 17 H18 V20 H10Z" fill="#fbd05b" /></svg>
      <svg className="mt-[11px] ml-[33px] shrink-0" width="30" height="20" viewBox="0 0 30 20"><rect x="7" width="23" height="20" fill="#2f87de" /><rect x="7" y="8" width="23" height="7" fill="#2167c0" /><rect x="7" y="15" width="23" height="5" fill="#184fa0" /><rect y="6" width="15" height="14" fill="#1a53ae" /><path d="M3 9 L5 17 L7.500 10 L10 17 L12 9" stroke="#fff" strokeWidth="1.600" fill="none" /></svg>
      <AdobeTile text="Pr" cls="border-[#d86bf0] bg-[#2a0038] text-[#e07af5]" ml="ml-[33px]" />
      <AdobeTile text="Ai" cls="border-[#f58a0c] bg-[#2b1200] text-[#ff8f12]" ml="ml-[34px]" />
      <AdobeTile text="Ps" cls="border-[#20b8f0] bg-[#001b26] text-[#2ac4f5]" ml="ml-[34px]" />
      <AdobeTile text="Au" cls="border-[#0cc79a] bg-[#00261f] text-[#14dcae]" ml="ml-[34px]" />
      <TeamViewerLogo size={30} className="mt-[10px] ml-[33px]" />
      <div className="ml-[17px] flex h-[31px] w-[61px] shrink-0 justify-center bg-[#f8b07a] pt-[13px]">
        <svg width="25" height="20" viewBox="0 0 25 20"><rect width="24" height="26" rx="3" fill="#7b8bd6" /><path d="M4 13 Q5 6 9 6 L12 7 L15 6 Q19 6 20 13 V17 H4Z" fill="#fff" /><circle cx="9.500" cy="12" r="1.600" fill="#7b8bd6" /><circle cx="20" cy="18" r="7.500" fill="#f04747" /><circle cx="20" cy="17" r="2" fill="#fff" /></svg>
      </div>
      <svg className="mt-[21px] ml-[439px] shrink-0" width="16" height="9" viewBox="0 0 16 9"><path d="M1 8 L8 1 L15 8" stroke="#111" strokeWidth="1.500" fill="none" /></svg>
      <svg className="mt-[15px] ml-[15px] shrink-0" width="13" height="16" viewBox="0 0 13 16"><rect x="2" width="9" height="14" rx="1.500" fill="#000" /><path d="M.7 9 V13 Q1 15.500 3 15.500 H10 Q12 15.500 12.300 13 V9" stroke="#000" fill="none" /></svg>
      <svg className="mt-[18px] ml-[17px] shrink-0" width="16" height="15" viewBox="0 0 16 15" fill="none" stroke="#333"><path d="M1 15 Q2 3 15 1 M4.500 15 Q6 7 15 5 M8 15 Q9 10 15 9" strokeWidth="1.300" /></svg>
      <svg className="mt-[17px] ml-[10px] shrink-0" width="19" height="17" viewBox="0 0 19 17" fill="none" stroke="#111" strokeWidth="1.300"><path d="M1 5.500 H4 L8 1.500 V14 L4 10 H1Z M10.500 5 Q12.500 8 10.500 11 M13 3 Q16 8 13 13 M15.500 1 Q19.500 8 15.500 15" /></svg>
      <span className="mt-[14px] ml-[15px] w-[52px] text-[15px] tracking-[-0.600px]">ENG</span>
      <span className="mt-[2px] w-[84px] text-[15px] tracking-[-0.650px] whitespace-nowrap">5:35 PM</span>
      <svg className="mt-[15px] shrink-0" width="30" height="17" viewBox="0 0 30 17"><path d="M0 0 H20 V17 H0Z" fill="#000" /><path d="M4 4.500 H16 M4 8.500 H16 M4 12.500 H11" stroke="#fff" strokeWidth="1.300" /><circle cx="20" cy="18" r="8.500" fill="#888" fillOpacity=".85" stroke="#ddd" /></svg>
    </div>
  );
}

export default function App() {
  return (
    <div className="flex h-[1061px] w-[1906px] flex-col overflow-hidden bg-[#191919]">
      <div className="flex h-[1030px] shrink-0">
        <ChromeWindow />
        <div className="flex w-[2px] shrink-0 bg-[#1a1420]"><span className="ml-px w-px bg-[#77747c]" /></div>
        <TeamViewerWindow />
      </div>
      <Taskbar />
    </div>
  );
}
